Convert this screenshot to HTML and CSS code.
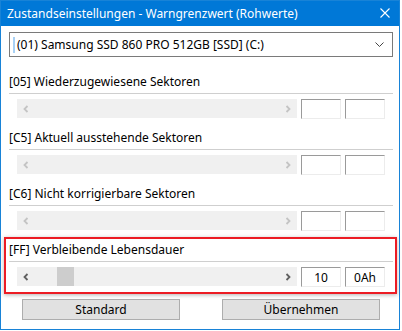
FILE: index.html
```html
<!DOCTYPE html>
<html>
<head>
    <meta charset="utf-8" />
    <title>Zustandseinstellungen</title>
    <link rel="stylesheet" href="styles.css">
</head>
<body>
    <div class="window">
        <div class="titlebar">
            <span class="title">Zustandseinstellungen - Warngrenzwert (Rohwerte)</span>
            <svg class="close" width="10" height="10" viewBox="0 0 10 10">
                <path d="M0.5 0.5 L9.5 9.5 M9.5 0.5 L0.5 9.5" stroke="#fff" stroke-width="1.1" fill="none" />
            </svg>
        </div>
        <div class="content">
            <div class="combo">
                <span class="caret"></span>
                <span class="combo-text">(01) Samsung SSD 860 PRO 512GB [SSD] (C:)</span>
                <svg class="drop" width="9" height="5" viewBox="0 0 9 5">
                    <path d="M0.5 0.5 L4.5 4.5 L8.5 0.5" stroke="#444" stroke-width="1" fill="none" />
                </svg>
            </div>

            <div class="section">
                <div class="label">[05] Wiederzugewiesene Sektoren</div>
                <div class="row">
                    <div class="scroll off">
                        <svg class="arr" width="6" height="8" viewBox="0 0 6 8"><path d="M4.5 1 L1.5 4 L4.5 7" /></svg>
                        <div class="track"></div>
                        <svg class="arr" width="6" height="8" viewBox="0 0 6 8"><path d="M1.5 1 L4.5 4 L1.5 7" /></svg>
                    </div>
                    <div class="box"></div>
                    <div class="box"></div>
                </div>
            </div>

            <div class="section">
                <div class="label">[C5] Aktuell ausstehende Sektoren</div>
                <div class="row">
                    <div class="scroll off">
                        <svg class="arr" width="6" height="8" viewBox="0 0 6 8"><path d="M4.5 1 L1.5 4 L4.5 7" /></svg>
                        <div class="track"></div>
                        <svg class="arr" width="6" height="8" viewBox="0 0 6 8"><path d="M1.5 1 L4.5 4 L1.5 7" /></svg>
                    </div>
                    <div class="box"></div>
                    <div class="box"></div>
                </div>
            </div>

            <div class="section">
                <div class="label">[C6] Nicht korrigierbare Sektoren</div>
                <div class="row">
                    <div class="scroll off">
                        <svg class="arr" width="6" height="8" viewBox="0 0 6 8"><path d="M4.5 1 L1.5 4 L4.5 7" /></svg>
                        <div class="track"></div>
                        <svg class="arr" width="6" height="8" viewBox="0 0 6 8"><path d="M1.5 1 L4.5 4 L1.5 7" /></svg>
                    </div>
                    <div class="box"></div>
                    <div class="box"></div>
                </div>
            </div>

            <div class="highlight">
                <div class="section">
                    <div class="label">[FF] Verbleibende Lebensdauer</div>
                    <div class="row">
                        <div class="scroll">
                            <svg class="arr" width="6" height="8" viewBox="0 0 6 8"><path d="M4.5 1 L1.5 4 L4.5 7" /></svg>
                            <div class="track"><div class="thumb"></div></div>
                            <svg class="arr" width="6" height="8" viewBox="0 0 6 8"><path d="M1.5 1 L4.5 4 L1.5 7" /></svg>
                        </div>
                        <div class="box">10</div>
                        <div class="box">0Ah</div>
                    </div>
                </div>
            </div>

            <div class="buttons">
                <button class="btn">Standard</button>
                <button class="btn">Übernehmen</button>
            </div>
        </div>
    </div>
</body>
</html>
```

FILE: styles.css
```css
body {
    margin: 0;
    background: #fff;
    font-family: "Noto Sans", "Open Sans", sans-serif;
    font-size: 12px;
    color: #000;
}

.window {
    width: 398px;
    height: 328px;
    border: 1px solid #1883d7;
    background: #fff;
}

.titlebar {
    height: 25px;
    background: #0078d7;
    color: #fff;
    display: flex;
    align-items: center;
    padding: 0 9px 0 6px;
}

.title {
    flex: 1;
    line-height: 25px;
}

.close {
    display: block;
    margin-top: -1px;
}

.content {
    padding: 6px 6px 0 8px;
}

.combo {
    height: 23px;
    border: 1px solid #7a7a7a;
    display: flex;
    align-items: center;
    padding: 0 8px 0 3px;
    margin-bottom: 14px;
}

.caret {
    width: 2px;
    height: 16px;
    background: #a8d1f5;
    margin-right: 2px;
}

.combo-text {
    flex: 1;
}

.drop {
    display: block;
}

.section {
    margin-bottom: 9px;
}

.label {
    height: 22px;
    line-height: 22px;
    border-bottom: 1px solid #cfcfcf;
}

.row {
    display: flex;
    margin-top: 5px;
    padding-left: 8px;
    height: 19px;
}

.scroll {
    width: 280px;
    background: #f0f0f0;
    display: flex;
    align-items: center;
    margin-right: 4px;
}

.arr {
    display: block;
    margin: 0 6px;
}

.arr path {
    fill: none;
    stroke: #606060;
    stroke-width: 1.8;
}

.scroll.off .arr path {
    stroke: #c4c4c4;
}

.track {
    flex: 1;
    height: 19px;
    padding-left: 22px;
}

.thumb {
    width: 17px;
    height: 19px;
    background: #cdcdcd;
}

.box {
    width: 38px;
    height: 18px;
    border-top: 1px solid #9a9a9a;
    border-left: 1px solid #9a9a9a;
    border-right: 1px solid #ececec;
    border-bottom: 1px solid #ececec;
    margin-right: 4px;
    text-align: center;
    line-height: 19px;
}

.highlight {
    margin: -2px -4px 0 -5px;
    border: 2px solid #ec1c24;
    padding: 0 2px 6px 3px;
    box-shadow: 0 1px 4px rgba(0, 0, 0, 0.3);
}

.highlight .section {
    margin-bottom: 0;
}

.buttons {
    display: flex;
    gap: 42px;
    padding-left: 13px;
    margin-top: 5px;
}

.btn {
    width: 158px;
    height: 21px;
    background: #e1e1e1;
    border: 1px solid #adadad;
    font-family: "Noto Sans", "Open Sans", sans-serif;
    font-size: 12px;
    color: #000;
    padding: 0;
}
```
